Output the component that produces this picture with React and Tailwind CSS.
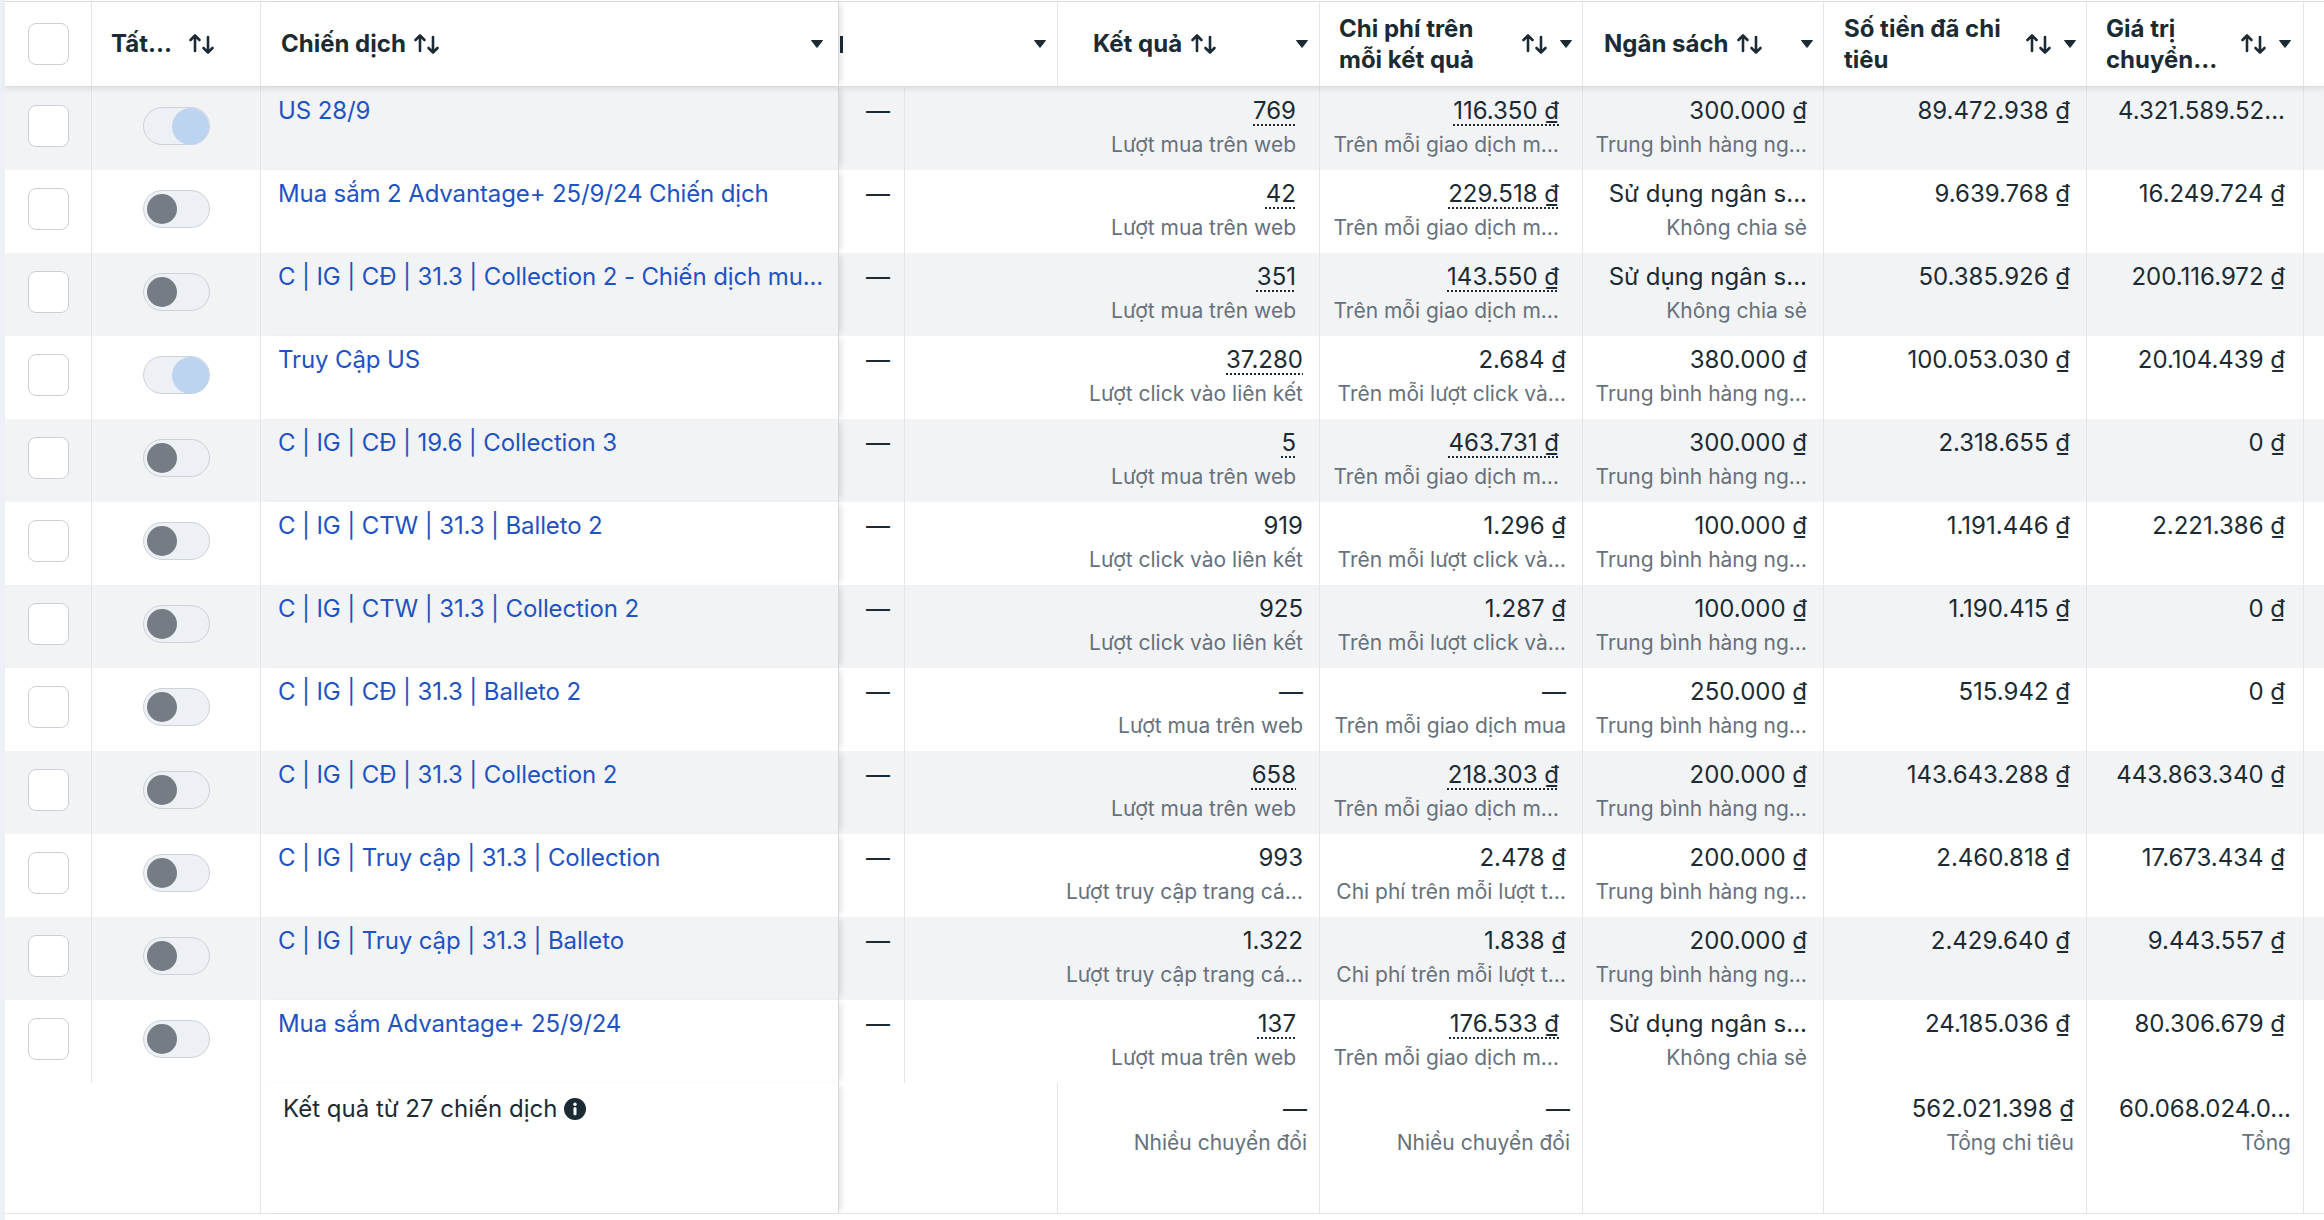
import React from "react";

const rows = [
  { name: "US 28/9", on: true, kq: "769", kqU: true, kqSub: "Lượt mua trên web", cp: "116.350 ₫", cpU: true, cpSub: "Trên mỗi giao dịch m…", pad: true, ns: "300.000 ₫", nsSub: "Trung bình hàng ng…", st: "89.472.938 ₫", gt: "4.321.589.52..." },
  { name: "Mua sắm 2 Advantage+ 25/9/24 Chiến dịch", on: false, kq: "42", kqU: true, kqSub: "Lượt mua trên web", cp: "229.518 ₫", cpU: true, cpSub: "Trên mỗi giao dịch m…", pad: true, ns: "Sử dụng ngân s...", nsSub: "Không chia sẻ", st: "9.639.768 ₫", gt: "16.249.724 ₫" },
  { name: "C | IG | CĐ | 31.3 | Collection 2 - Chiến dịch mu...", on: false, kq: "351", kqU: true, kqSub: "Lượt mua trên web", cp: "143.550 ₫", cpU: true, cpSub: "Trên mỗi giao dịch m…", pad: true, ns: "Sử dụng ngân s...", nsSub: "Không chia sẻ", st: "50.385.926 ₫", gt: "200.116.972 ₫" },
  { name: "Truy Cập US", on: true, kq: "37.280", kqU: true, kqSub: "Lượt click vào liên kết", cp: "2.684 ₫", cpU: false, cpSub: "Trên mỗi lượt click và…", pad: false, ns: "380.000 ₫", nsSub: "Trung bình hàng ng…", st: "100.053.030 ₫", gt: "20.104.439 ₫" },
  { name: "C | IG | CĐ | 19.6 | Collection 3", on: false, kq: "5", kqU: true, kqSub: "Lượt mua trên web", cp: "463.731 ₫", cpU: true, cpSub: "Trên mỗi giao dịch m…", pad: true, ns: "300.000 ₫", nsSub: "Trung bình hàng ng…", st: "2.318.655 ₫", gt: "0 ₫" },
  { name: "C | IG | CTW | 31.3 | Balleto 2", on: false, kq: "919", kqU: false, kqSub: "Lượt click vào liên kết", cp: "1.296 ₫", cpU: false, cpSub: "Trên mỗi lượt click và…", pad: false, ns: "100.000 ₫", nsSub: "Trung bình hàng ng…", st: "1.191.446 ₫", gt: "2.221.386 ₫" },
  { name: "C | IG | CTW | 31.3 | Collection 2", on: false, kq: "925", kqU: false, kqSub: "Lượt click vào liên kết", cp: "1.287 ₫", cpU: false, cpSub: "Trên mỗi lượt click và…", pad: false, ns: "100.000 ₫", nsSub: "Trung bình hàng ng…", st: "1.190.415 ₫", gt: "0 ₫" },
  { name: "C | IG | CĐ | 31.3 | Balleto 2", on: false, kq: "—", kqU: false, kqSub: "Lượt mua trên web", cp: "—", cpU: false, cpSub: "Trên mỗi giao dịch mua", pad: false, ns: "250.000 ₫", nsSub: "Trung bình hàng ng…", st: "515.942 ₫", gt: "0 ₫" },
  { name: "C | IG | CĐ | 31.3 | Collection 2", on: false, kq: "658", kqU: true, kqSub: "Lượt mua trên web", cp: "218.303 ₫", cpU: true, cpSub: "Trên mỗi giao dịch m…", pad: true, ns: "200.000 ₫", nsSub: "Trung bình hàng ng…", st: "143.643.288 ₫", gt: "443.863.340 ₫" },
  { name: "C | IG | Truy cập | 31.3 | Collection", on: false, kq: "993", kqU: false, kqSub: "Lượt truy cập trang cá…", cp: "2.478 ₫", cpU: false, cpSub: "Chi phí trên mỗi lượt t…", pad: false, ns: "200.000 ₫", nsSub: "Trung bình hàng ng…", st: "2.460.818 ₫", gt: "17.673.434 ₫" },
  { name: "C | IG | Truy cập | 31.3 | Balleto", on: false, kq: "1.322", kqU: false, kqSub: "Lượt truy cập trang cá…", cp: "1.838 ₫", cpU: false, cpSub: "Chi phí trên mỗi lượt t…", pad: false, ns: "200.000 ₫", nsSub: "Trung bình hàng ng…", st: "2.429.640 ₫", gt: "9.443.557 ₫" },
  { name: "Mua sắm Advantage+ 25/9/24", on: false, kq: "137", kqU: true, kqSub: "Lượt mua trên web", cp: "176.533 ₫", cpU: true, cpSub: "Trên mỗi giao dịch m…", pad: true, ns: "Sử dụng ngân s...", nsSub: "Không chia sẻ", st: "24.185.036 ₫", gt: "80.306.679 ₫" },
];

function SortIcon() {
  return (
    <svg width="28" height="22" viewBox="0 0 28 22" fill="none" stroke="#1c2b33" strokeWidth="2.6" strokeLinecap="round" strokeLinejoin="round" className="shrink-0">
      <path d="M7 18V2.5M2.5 7L7 2.5 11.5 7" />
      <path d="M20 4v15.5M15.5 15l4.5 4.5 4.5-4.5" />
    </svg>
  );
}

function Caret() {
  return (
    <svg width="12" height="8" viewBox="0 0 12 8" className="shrink-0">
      <path d="M0.5 0.5h11L6 7.5z" fill="#1c2b33" strokeLinejoin="round" stroke="#1c2b33" strokeWidth="1" />
    </svg>
  );
}

function InfoIcon() {
  return (
    <svg width="22" height="22" viewBox="0 0 22 22" className="shrink-0">
      <circle cx="11" cy="11" r="11" fill="#1c2b33" />
      <circle cx="11" cy="6.2" r="1.7" fill="#fff" />
      <rect x="9.5" y="9.2" width="3" height="8" rx="1.2" fill="#fff" />
    </svg>
  );
}

function Checkbox() {
  return <div className="w-[41px] h-[42px] rounded-[8px] border-[1.5px] border-[#cbd0d6] bg-white" />;
}

function Toggle({ on }) {
  if (on) {
    return (
      <div className="w-[67px] h-[38px] rounded-full bg-[#edf0f4] border border-[#cdd2d9] flex items-center justify-end">
        <div className="w-[37px] h-[37px] rounded-full bg-[#bdd4f1]" />
      </div>
    );
  }
  return (
    <div className="w-[67px] h-[38px] rounded-full bg-[#edf0f4] border border-[#cdd2d9] flex items-center pl-[3px]">
      <div className="w-[30px] h-[30px] rounded-full bg-[#767c83]" />
    </div>
  );
}

function Value({ text, u, sub, pad }) {
  return (
    <div className={`flex flex-col items-end pt-[9px] ${pad ? "pr-[23px]" : "pr-[16px]"}`}>
      <span className={`text-[24px] leading-[30px] text-[#1c2b33] whitespace-nowrap ${u ? "underline decoration-dotted decoration-2 underline-offset-[5px]" : ""}`}>
        {text}
      </span>
      <span className="mt-[4px] text-[21px] leading-[30px] text-[#67717b] whitespace-nowrap">{sub}</span>
    </div>
  );
}

export default function App() {
  const line = "border-r border-[#e3e5e9]";
  return (
    <div className="min-h-screen bg-white flex font-['Inter','Noto_Sans',sans-serif] text-[#1c2b33]">
      <div className="w-[5px] shrink-0 bg-[#edf0f4]" />
      <div className="flex-1 mt-px border-t border-[#d9dce1]">
        {/* header */}
        <div className="relative z-20 flex h-[85px] bg-white border-b border-[#d9dce1] shadow-[0_3px_5px_rgba(0,0,0,0.07)] font-bold text-[24px]">
          <div className={`w-[87px] shrink-0 flex items-center justify-center ${line}`}>
            <Checkbox />
          </div>
          <div className={`w-[169px] shrink-0 flex items-center pl-[19px] ${line}`}>
            <span>Tất...</span>
            <span className="ml-[16px]"><SortIcon /></span>
          </div>
          <div className="relative z-10 w-[578px] shrink-0 flex items-center pl-[20px] pr-[15px] border-r border-[#d4d7dc] shadow-[5px_0_6px_-3px_rgba(0,0,0,0.13)] bg-white">
            <span>Chiến dịch</span>
            <span className="ml-[7px]"><SortIcon /></span>
            <span className="flex-1" />
            <Caret />
          </div>
          <div className={`w-[219px] shrink-0 flex items-center pr-[11px] overflow-hidden ${line}`}>
            <span className="w-[3px] h-[17px] bg-[#1c2b33] ml-[1px]" />
            <span className="flex-1" />
            <Caret />
          </div>
          <div className={`w-[262px] shrink-0 flex items-center pl-[35px] pr-[11px] ${line}`}>
            <span>Kết quả</span>
            <span className="ml-[8px]"><SortIcon /></span>
            <span className="flex-1" />
            <Caret />
          </div>
          <div className={`w-[263px] shrink-0 flex items-center pl-[19px] pr-[10px] ${line}`}>
            <span className="flex-1 leading-[31px]">Chi phí trên<br />mỗi kết quả</span>
            <SortIcon />
            <span className="ml-[11px]"><Caret /></span>
          </div>
          <div className={`w-[241px] shrink-0 flex items-center pl-[21px] pr-[10px] ${line}`}>
            <span>Ngân sách</span>
            <span className="ml-[8px]"><SortIcon /></span>
            <span className="flex-1" />
            <Caret />
          </div>
          <div className={`w-[263px] shrink-0 flex items-center pl-[20px] pr-[10px] ${line}`}>
            <span className="flex-1 leading-[31px]">Số tiền đã chi<br />tiêu</span>
            <SortIcon />
            <span className="ml-[11px]"><Caret /></span>
          </div>
          <div className={`w-[217px] shrink-0 flex items-center pl-[19px] pr-[12px] ${line}`}>
            <span className="flex-1 leading-[31px]">Giá trị<br />chuyển...</span>
            <SortIcon />
            <span className="ml-[11px]"><Caret /></span>
          </div>
          <div className="flex-1" />
        </div>

        {/* rows */}
        {rows.map((r, i) => (
          <div key={i} className={`flex h-[83px] ${i % 2 === 0 ? "bg-[#f2f3f5]" : "bg-white"}`}>
            <div className={`w-[87px] shrink-0 flex items-center justify-center pb-[5px] ${line}`}>
              <Checkbox />
            </div>
            <div className={`w-[169px] shrink-0 flex items-center justify-center pb-[5px] ${line}`}>
              <Toggle on={r.on} />
            </div>
            <div className={`relative z-10 w-[578px] shrink-0 pl-[17px] pr-[8px] pt-[9px] border-r border-[#d4d7dc] shadow-[5px_0_6px_-3px_rgba(0,0,0,0.13)] ${i % 2 === 0 ? "bg-[#f2f3f5]" : "bg-white"}`}>
              <div className="text-[24px] leading-[30px] tracking-[-0.12px] text-[#1f53c1] whitespace-nowrap">{r.name}</div>
            </div>
            <div className={`w-[66px] shrink-0 pl-[27px] pt-[9px] ${line}`}>
              <span className="text-[24px] leading-[30px]">—</span>
            </div>
            <div className={`w-[415px] shrink-0 ${line}`}>
              <Value text={r.kq} u={r.kqU} sub={r.kqSub} pad={r.pad} />
            </div>
            <div className={`w-[263px] shrink-0 ${line}`}>
              <Value text={r.cp} u={r.cpU} sub={r.cpSub} pad={r.pad} />
            </div>
            <div className={`w-[241px] shrink-0 ${line}`}>
              <Value text={r.ns} sub={r.nsSub} />
            </div>
            <div className={`w-[263px] shrink-0 ${line}`}>
              <Value text={r.st} sub="" />
            </div>
            <div className={`w-[217px] shrink-0 ${line}`}>
              <div className="pt-[9px] pr-[18px] text-right text-[24px] leading-[30px] whitespace-nowrap">{r.gt}</div>
            </div>
            <div className="flex-1" />
          </div>
        ))}

        {/* footer */}
        <div className="flex h-[131px] bg-white border-b border-[#e3e5e9]">
          <div className={`w-[256px] shrink-0 ${line}`} />
          <div className="relative z-10 w-[578px] shrink-0 pl-[22px] pt-[11px] border-r border-[#d4d7dc] shadow-[5px_0_6px_-3px_rgba(0,0,0,0.13)] bg-white">
            <div className="flex items-center gap-[7px] text-[24px] leading-[30px]">
              <span>Kết quả từ 27 chiến dịch</span>
              <InfoIcon />
            </div>
          </div>
          <div className={`w-[219px] shrink-0 ${line}`} />
          <div className={`w-[262px] shrink-0 pt-[2px] ${line}`}>
            <div className="flex flex-col items-end pt-[9px] pr-[12px]">
              <span className="text-[24px] leading-[30px]">—</span>
              <span className="mt-[4px] text-[21px] leading-[30px] text-[#67717b]">Nhiều chuyển đổi</span>
            </div>
          </div>
          <div className={`w-[263px] shrink-0 pt-[2px] ${line}`}>
            <div className="flex flex-col items-end pt-[9px] pr-[12px]">
              <span className="text-[24px] leading-[30px]">—</span>
              <span className="mt-[4px] text-[21px] leading-[30px] text-[#67717b]">Nhiều chuyển đổi</span>
            </div>
          </div>
          <div className={`w-[241px] shrink-0 ${line}`} />
          <div className={`w-[263px] shrink-0 pt-[2px] ${line}`}>
            <div className="flex flex-col items-end pt-[9px] pr-[12px]">
              <span className="text-[24px] leading-[30px]">562.021.398 ₫</span>
              <span className="mt-[4px] text-[21px] leading-[30px] text-[#67717b]">Tổng chi tiêu</span>
            </div>
          </div>
          <div className={`w-[217px] shrink-0 pt-[2px] ${line}`}>
            <div className="flex flex-col items-end pt-[9px] pr-[12px]">
              <span className="text-[24px] leading-[30px] whitespace-nowrap">60.068.024.0...</span>
              <span className="mt-[4px] text-[21px] leading-[30px] text-[#67717b]">Tổng</span>
            </div>
          </div>
          <div className="flex-1" />
        </div>
      </div>
    </div>
  );
}
